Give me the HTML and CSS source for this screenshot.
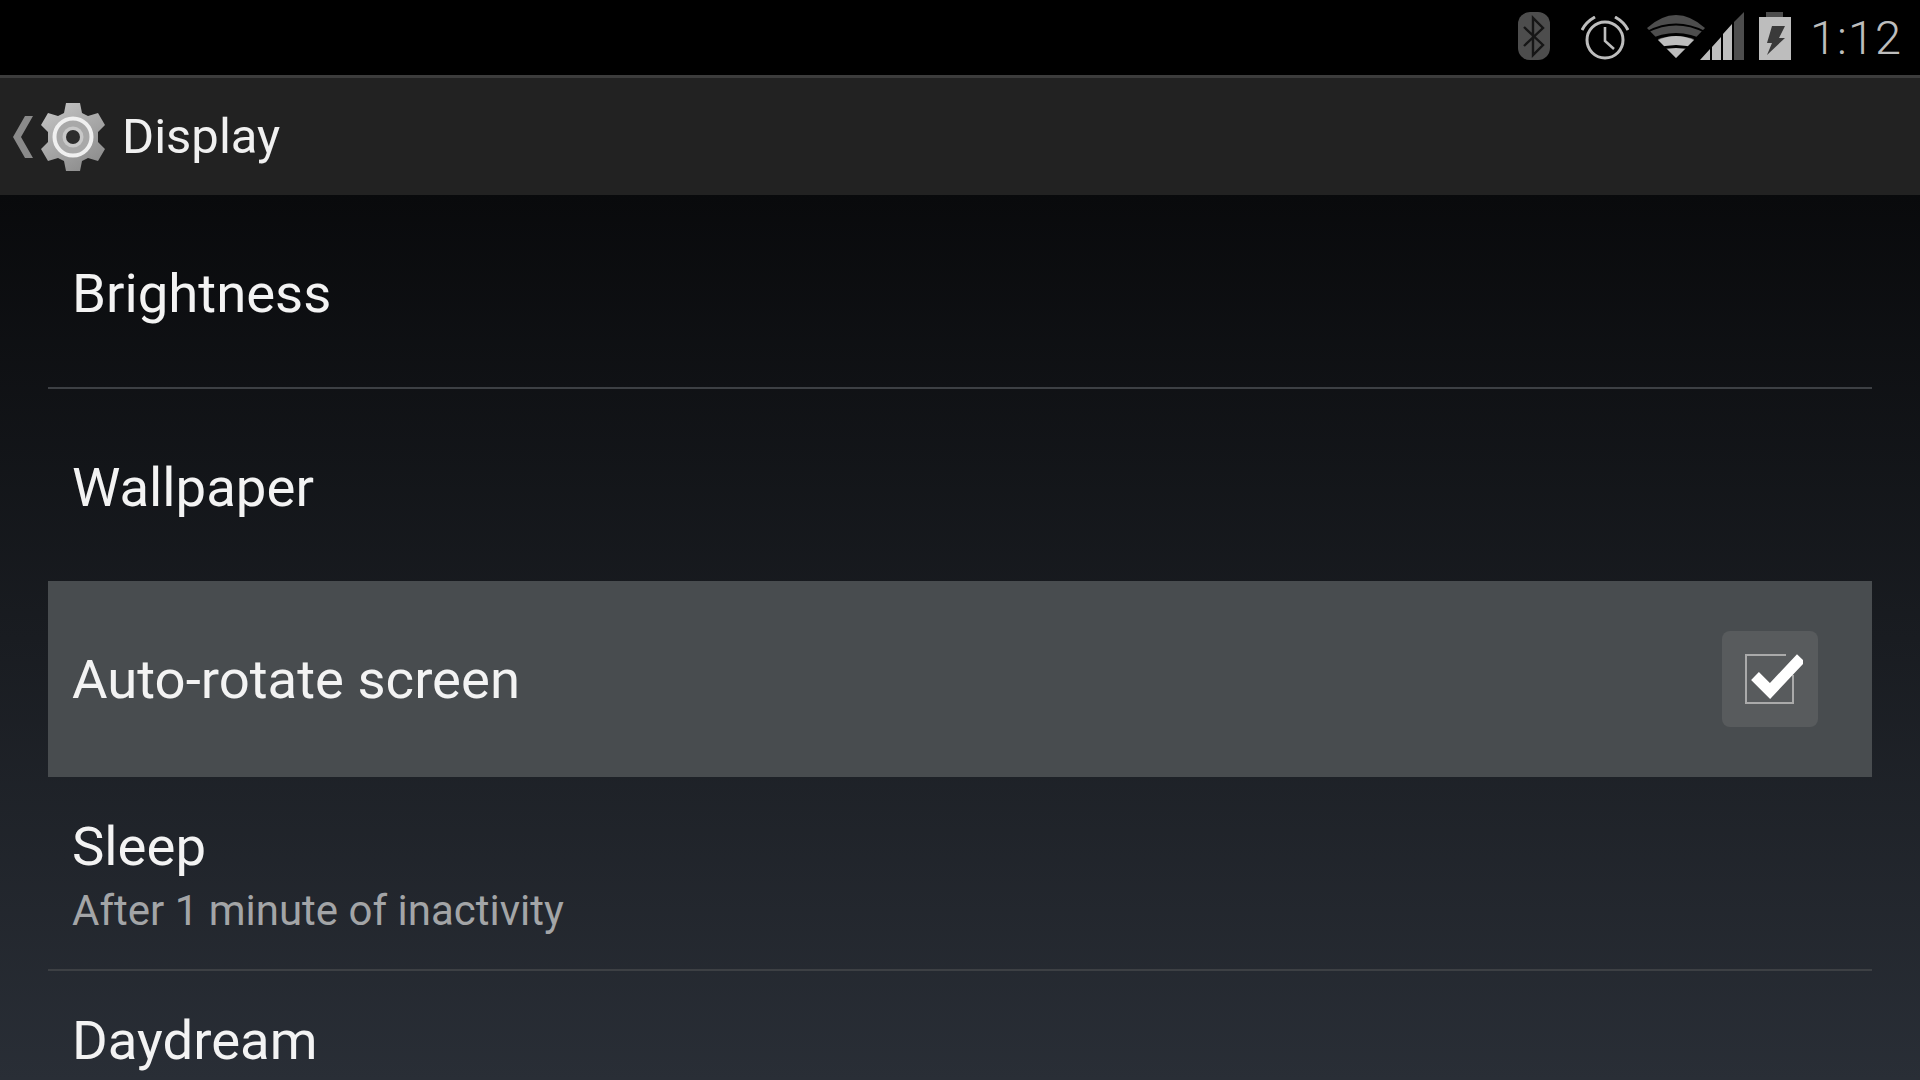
FILE: index.html
```html
<!DOCTYPE html>
<html lang="en">
<head>
<meta charset="utf-8">
<title>Display</title>
<link rel="stylesheet" href="styles.css">
</head>
<body>
<div class="screen">
  <header class="status">
    <svg class="ic-bt" viewBox="0 0 32 48" width="32" height="48">
      <rect x="0" y="0" width="32" height="48" rx="12" fill="#4d4d4d"/>
      <path d="M6 15 L25 33 L15 43 V6 L25 16 L6 34" fill="none" stroke="#161616" stroke-width="2.4"/>
    </svg>
    <svg class="ic-alarm" viewBox="0 0 48 44" width="48" height="44">
      <circle cx="24" cy="24" r="18" fill="none" stroke="#bdbdbd" stroke-width="3"/>
      <path d="M24 11 V25 L33 33" fill="none" stroke="#bdbdbd" stroke-width="2.6"/>
      <path d="M1 14 Q5 6 14 1 M47 14 Q43 6 34 1" fill="none" stroke="#bdbdbd" stroke-width="3"/>
    </svg>
    <svg class="ic-net" viewBox="0 0 97 48" width="97" height="48">
      <path d="M0 16 Q29 -10 58 16 L29 46 Z" fill="#4d4d4d"/>
      <path d="M0 20 Q29 5 58 20" fill="none" stroke="#000" stroke-width="1.8"/>
      <path d="M0 30 Q29 15 58 30" fill="none" stroke="#000" stroke-width="3"/>
      <path d="M11 28 Q29 20 47 28 L29 46 Z" fill="#bdbdbd"/>
      <path d="M8 38 Q29 31 50 38" fill="none" stroke="#000" stroke-width="3"/>
      <path d="M53 48 L63 37 V48 Z M65 35 L74 25 V48 H65 Z M76 22 L85 12 V48 H76 Z" fill="#bdbdbd"/>
      <path d="M87 10 L97 0 V48 H87 Z" fill="#4d4d4d"/>
    </svg>
    <svg class="ic-batt" viewBox="0 0 32 48" width="32" height="48">
      <path d="M7 0 H24 V5 H32 V48 H0 V5 H7 Z" fill="#bdbdbd"/>
      <path d="M7 0 H24 V5 H7 Z" fill="#4d4d4d"/>
      <path d="M13 14 H26 L20 26 H26 L8 43 L13 31 H8 Z" fill="#3a3a3a"/>
    </svg>
    <span class="clock">1:12</span>
  </header>
  <nav class="action">
    <svg class="ic-back" viewBox="0 0 20 42" width="20" height="42">
      <path d="M20 0 H12 L0 21 L12 42 H20 L8 21 Z" fill="#8a8a8a"/>
    </svg>
    <svg class="ic-gear" viewBox="0 0 64 68" width="64" height="68">
      <defs>
        <linearGradient id="gearFill" x1="0" y1="0" x2="0.6" y2="1">
          <stop offset="0" stop-color="#c8c8c8"/>
          <stop offset="1" stop-color="#8f8f8f"/>
        </linearGradient>
      </defs>
      <path fill="url(#gearFill)" d="M25 0 H39 L41 10 L47 13 L57 10 L64 22 L57 29 V39 L64 46 L57 58 L47 55 L41 58 L39 68 H25 L23 58 L17 55 L7 58 L0 46 L7 39 V29 L0 22 L7 10 L17 13 L23 10 Z"/>
      <circle cx="32" cy="34" r="18.5" fill="#a8a8a8" stroke="#f0f0f0" stroke-width="4"/>
      <circle cx="32" cy="34" r="10.5" fill="#c8c8c8"/>
      <circle cx="32" cy="34" r="7" fill="#2c2c2c"/>
    </svg>
    <h1 class="title">Display</h1>
  </nav>
  <main class="list">
    <section class="row one first sep"><div class="label">Brightness</div></section>
    <section class="row one second"><div class="label">Wallpaper</div></section>
    <section class="row active">
      <div class="label">Auto-rotate screen</div>
      <div class="check">
        <svg viewBox="0 0 58 52" width="58" height="52">
          <path d="M41 1 H1 V49 H48 V21" fill="none" stroke="#aaa" stroke-width="2"/>
          <path d="M10 22 L25 37 L56 4" fill="none" stroke="#fff" stroke-width="11"/>
        </svg>
      </div>
    </section>
    <section class="row two sep">
      <div class="label">Sleep</div>
      <div class="sub">After 1 minute of inactivity</div>
    </section>
    <section class="row two"><div class="label">Daydream</div></section>
  </main>
</div>
</body>
</html>
```

FILE: styles.css
```css
html, body {
  margin: 0;
  height: 100%;
  background: #000;
}
.screen {
  width: 1920px;
  height: 1080px;
  overflow: hidden;
  display: flex;
  flex-direction: column;
  font-family: Roboto, "Liberation Sans", sans-serif;
}
.status {
  height: 75px;
  flex: none;
  background: #000;
  display: flex;
  align-items: flex-start;
  box-sizing: border-box;
  padding: 12px 0 0 1518px;
}
.ic-bt { margin-right: 31px; flex: none; }
.ic-alarm { margin-top: 4px; margin-right: 18px; flex: none; }
.ic-net { margin-right: 15px; flex: none; }
.ic-batt { margin-right: 19px; flex: none; }
.clock {
  font-size: 47px;
  font-weight: 300;
  line-height: 56px;
  margin-top: -2px;
  color: #bdbdbd;
  letter-spacing: 1px;
}
.action {
  height: 117px;
  flex: none;
  background: #222;
  border-top: 3px solid #3c3c3c;
  display: flex;
  align-items: center;
  padding-left: 13px;
}
.ic-back { margin-right: 8px; flex: none; }
.ic-gear { margin-right: 17px; flex: none; }
.title {
  margin: 0;
  font-size: 49px;
  font-weight: 400;
  color: #f0f0f0;
}
.list {
  flex: 1;
  min-height: 0;
  background: linear-gradient(#090a0c, #292e36);
  padding: 0 48px;
}
.row {
  box-sizing: border-box;
  display: flex;
  flex-direction: column;
  padding-left: 24px;
}
.one {
  justify-content: center;
  padding-top: 4px;
}
.first { height: 194px; }
.second { height: 192px; }
.two {
  height: 194px;
  padding-top: 38px;
}
.sep { border-bottom: 2px solid #3d4044; }
.row.active {
  height: 196px;
  background: #484c4f;
  flex-direction: row;
  justify-content: space-between;
  align-items: center;
  padding-right: 54px;
}
.label {
  font-size: 54.5px;
  line-height: 62px;
  font-weight: 400;
  color: #f3f3f3;
}
.sub {
  font-size: 42px;
  line-height: 50px;
  margin-top: 9px;
  color: #a3a5a7;
}
.check {
  width: 96px;
  height: 96px;
  border-radius: 8px;
  background: #585b5d;
  display: flex;
  align-items: flex-start;
  box-sizing: border-box;
  padding: 23px 0 0 23px;
}
```
